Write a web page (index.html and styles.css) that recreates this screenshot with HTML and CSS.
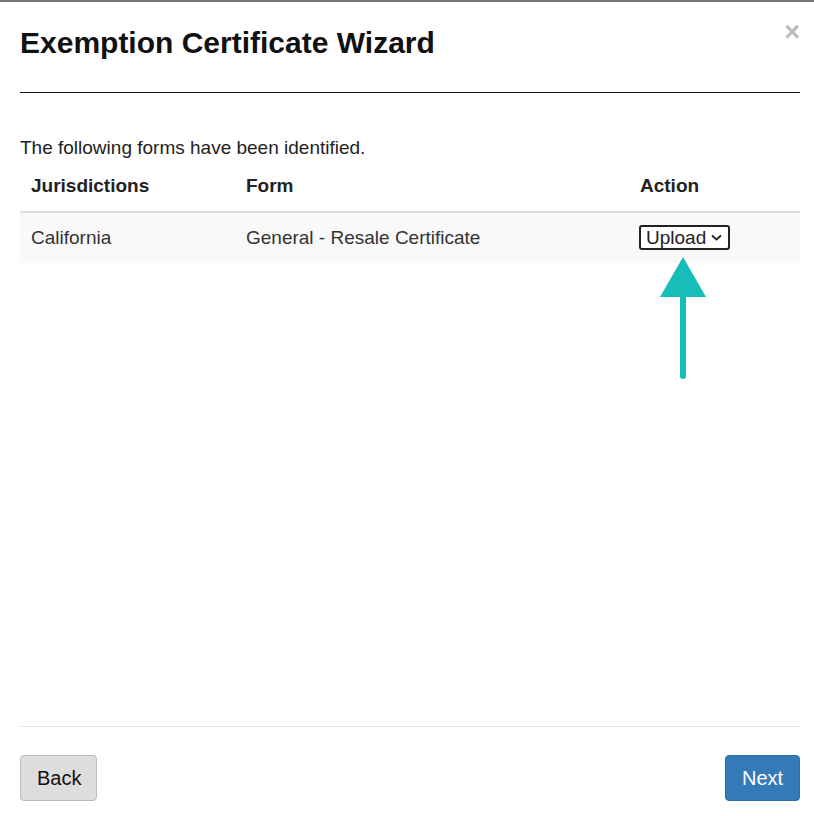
FILE: index.html
```html
<!DOCTYPE html>
<html lang="en">
<head>
    <meta charset="UTF-8">
    <meta name="viewport" content="width=device-width, initial-scale=1.0">
    <title>Exemption Certificate Wizard</title>
    <link rel="stylesheet" href="styles.css">
</head>
<body>
    <div class="modal">
        <div class="modal-header">
            <h1 class="modal-title">Exemption Certificate Wizard</h1>
            <span class="close">&times;</span>
        </div>

        <div class="modal-body">
            <p class="intro">The following forms have been identified.</p>
            <table class="forms">
                <thead>
                    <tr>
                        <th class="col-jur">Jurisdictions</th>
                        <th class="col-form">Form</th>
                        <th>Action</th>
                    </tr>
                </thead>
                <tbody>
                    <tr>
                        <td>California</td>
                        <td>General - Resale Certificate</td>
                        <td class="action-cell">
                            <span class="select">Upload
                                <svg class="caret" width="11" height="7" viewBox="0 0 11 7"><path d="M1 1.5 L5.5 5.5 L10 1.5" fill="none" stroke="#222" stroke-width="1.8"/></svg>
                            </span>
                            <svg class="pointer" width="50" height="124" viewBox="0 0 50 124">
                                <polygon points="24,0 47,40 1,40" fill="#17bdb8"/>
                                <line x1="24" y1="38" x2="24" y2="119" stroke="#17bdb8" stroke-width="6" stroke-linecap="round"/>
                            </svg>
                        </td>
                    </tr>
                </tbody>
            </table>
        </div>

        <div class="modal-footer">
            <button class="btn btn-default">Back</button>
            <button class="btn btn-primary">Next</button>
        </div>
    </div>
</body>
</html>
```

FILE: styles.css
```css
* {
    margin: 0;
    padding: 0;
    box-sizing: border-box;
    font-family: 'Liberation Sans', Arial, sans-serif;
}

body {
    background: #fff;
    color: #333;
}

.modal {
    height: 816px;
    border-top: 2px solid #777;
    padding: 0 14px 0 20px;
    display: flex;
    flex-direction: column;
}

/* Шапка */
.modal-header {
    display: flex;
    justify-content: space-between;
    align-items: flex-start;
    border-bottom: 1px solid #111;
    height: 91px;
}

.modal-title {
    font-size: 30px;
    font-weight: bold;
    color: #111;
    margin-top: 24px;
}

.close {
    font-size: 27px;
    font-weight: bold;
    color: #bbb;
    line-height: 1;
    margin-top: 17px;
}

/* Таблица форм */
.modal-body {
    flex: 1;
    padding-top: 43px;
}

.intro {
    font-size: 19px;
    line-height: 24px;
    color: #222;
}

.forms {
    width: 780px;
    border-collapse: collapse;
    font-size: 19px;
}

.forms th {
    text-align: left;
    font-weight: bold;
    color: #222;
    padding: 14px 11px 13px;
    line-height: 24px;
    border-bottom: 2px solid #ddd;
}

.col-jur { width: 215px; }
.col-form { width: 394px; }

.forms td {
    background: #f9f9f9;
    padding: 12px 11px 13px;
    line-height: 24px;
    color: #333;
}

.action-cell {
    position: relative;
    padding-left: 10px !important;
}

.select {
    display: inline-flex;
    align-items: center;
    gap: 5px;
    border: 2px solid #222;
    border-radius: 3px;
    padding: 0 6px 0 5px;
    height: 25px;
    line-height: 21px;
    color: #222;
    background: #fff;
}

.pointer {
    position: absolute;
    left: 30px;
    top: 44px;
}

/* Подвал */
.modal-footer {
    border-top: 1px solid #e5e5e5;
    height: 90px;
    display: flex;
    justify-content: space-between;
    align-items: flex-start;
    padding-top: 28px;
}

.btn {
    font-size: 20px;
    height: 46px;
    padding: 0 16px;
    border-radius: 4px;
    border: 1px solid #bbb;
}

.btn-default {
    background: #ddd;
    color: #111;
    width: 77px;
}

.btn-primary {
    background: #337ab7;
    border-color: #2e6da4;
    color: #fff;
    width: 75px;
}
```
